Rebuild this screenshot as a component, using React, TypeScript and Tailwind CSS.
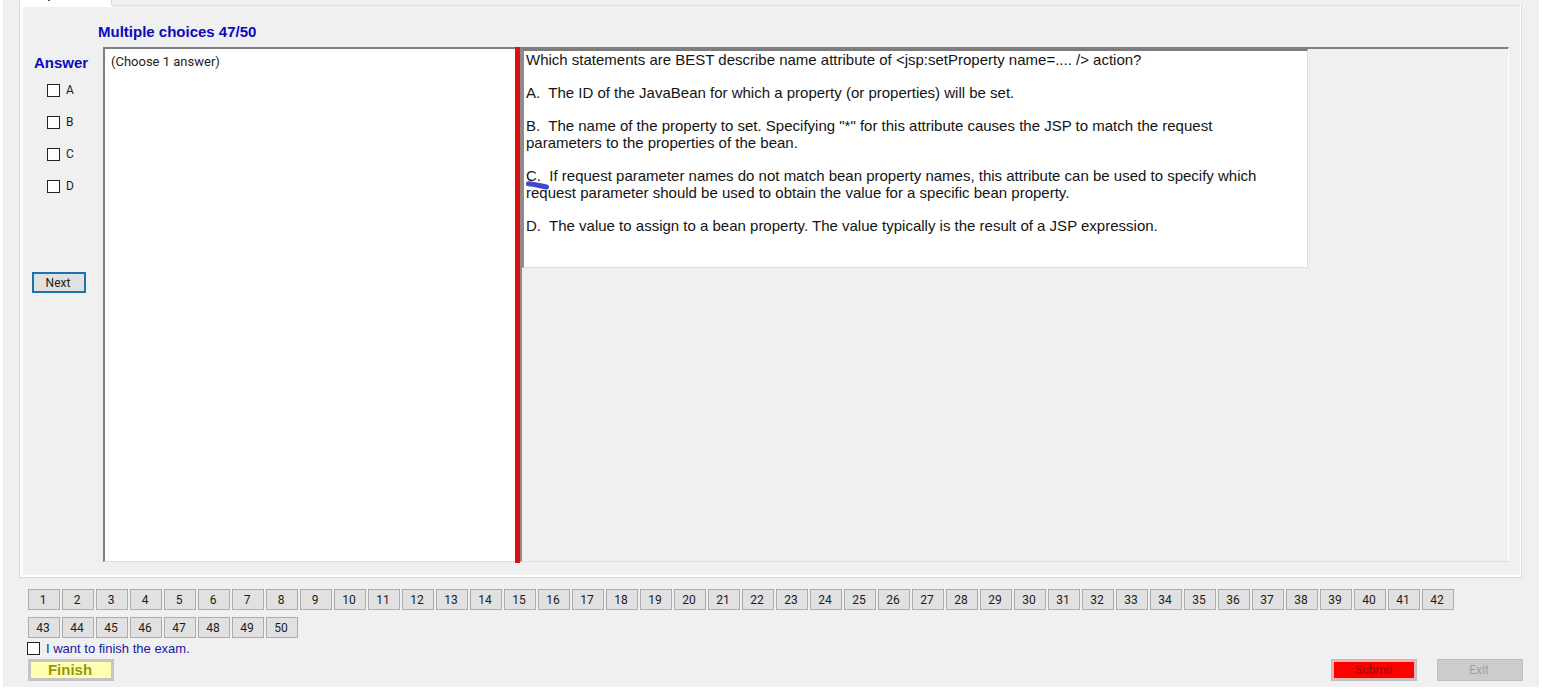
import { useState } from 'react';

const choices = ['A', 'B', 'C', 'D'];
const questionNumbers = Array.from({ length: 50 }, (_, i) => i + 1);

const checkboxClass =
  'h-[13px] w-[13px] shrink-0 appearance-none border border-[#222222] bg-white checked:bg-[#1a1a9a]';

function Choice({ letter }: { letter: string }) {
  return (
    <label className="flex h-4 items-center gap-[6px] text-xs text-[#1c1c1c]">
      <input type="checkbox" name={letter} className={checkboxClass} />
      {letter}
    </label>
  );
}

function AnswerColumn() {
  return (
    <aside className="flex w-20 shrink-0 flex-col items-start">
      <h2 className="mt-[6px] ml-[11px] font-['Liberation_Sans',sans-serif] text-[15px] leading-5 font-bold text-[#0a0abe]">
        Answer
      </h2>
      <div className="mt-[9px] ml-6 flex flex-col gap-4">
        {choices.map((letter) => (
          <Choice key={letter} letter={letter} />
        ))}
      </div>
      <button
        type="button"
        className="mt-[78px] ml-[9px] h-[21px] w-[54px] border-2 border-[#1f73ad] bg-[#e1e1e1] pr-[2px] text-xs leading-4 text-[#1c1c1c]"
      >
        Next
      </button>
    </aside>
  );
}

function Question() {
  return (
    <article className="flex h-[219px] w-[786px] flex-col gap-4 border-t-2 border-r border-b border-l-2 border-t-[#7c7c7c] border-r-[#dddddd] border-b-[#dddddd] border-l-[#8c8c8c] bg-white pl-[2px] font-['Liberation_Sans',sans-serif] text-[15px] leading-[17px] text-[#141414]">
      <p>Which statements are BEST describe name attribute of &lt;jsp:setProperty name=.... /&gt; action?</p>
      <p>A.&nbsp; The ID of the JavaBean for which a property (or properties) will be set.</p>
      <p>
        B.&nbsp; The name of the property to set. Specifying "*" for this attribute causes the JSP to match the request
        <br />
        parameters to the properties of the bean.
      </p>
      <p className="relative">
        C.&nbsp; If request parameter names do not match bean property names, this attribute can be used to specify which
        <br />
        request parameter should be used to obtain the value for a specific bean property.
        <svg className="absolute top-3 left-0 h-3 w-6" viewBox="0 0 24 12" fill="none" aria-hidden="true">
          <path d="M2.500 4.800 C8 5.200 14 6.800 20.500 8" stroke="#3f48cc" strokeWidth="5" strokeLinecap="round" />
        </svg>
      </p>
      <p>D.&nbsp; The value to assign to a bean property. The value typically is the result of a JSP expression.</p>
    </article>
  );
}

export default function App() {
  const [finishing, setFinishing] = useState(false);

  return (
    <div className="bg-white pb-[3px] font-[Roboto,sans-serif]">
      <main className="mx-[3px] bg-[#f0f0f0] pb-[6px]">
        <div className="ml-4 flex h-[5px]">
          <div className="w-[93px] border-r border-l border-[#dcdcdc] bg-white pl-7">
            <div className="h-px w-[2px] bg-[#555555]" />
          </div>
        </div>

        <section className="mr-[17px] ml-4 border border-[#dcdcdc]">
          <div className="border-r border-b-2 border-l-[3px] border-white">
            <div className="-mt-px h-[2px] w-[89px] bg-white" />
            <h1 className="mt-[15px] ml-[75px] font-['Liberation_Sans',sans-serif] text-[15px] leading-5 font-bold text-[#0a0abe]">
              Multiple choices 47/50
            </h1>
            <div className="mt-[5px] mr-[11px] mb-3 flex h-[516px]">
              <AnswerColumn />
              <div className="mb-px w-[412px] shrink-0 border-t-2 border-b border-l-2 border-t-[#808080] border-b-[#dddddd] border-l-[#808080] bg-white pt-1 pl-[6px] text-[13px] leading-[18px] text-[#1c1c1c]">
                (Choose 1 answer)
              </div>
              <div className="w-[5px] shrink-0 bg-[#e00f0f]" />
              <div className="mb-px min-w-0 grow border-t-2 border-r border-b border-l-2 border-t-[#808080] border-r-white border-b-[#dddddd] border-l-[#8c8c8c]">
                <Question />
              </div>
            </div>
          </div>
        </section>

        <nav className="mt-[11px] mr-[70px] ml-[25px] flex flex-wrap gap-x-[2px] gap-y-[7px]">
          {questionNumbers.map((n) => (
            <button
              key={n}
              type="button"
              className="h-[21px] w-8 border border-[#adadad] bg-[#e1e1e1] pr-[2px] text-xs leading-4 text-[#1c1c1c]"
            >
              {n}
            </button>
          ))}
        </nav>

        <footer className="mr-4 ml-6 flex items-end justify-between">
          <div>
            <label className="flex h-[21px] items-center gap-[6px] font-['Liberation_Sans',sans-serif] text-[13px] text-[#1717a5]">
              <input
                type="checkbox"
                checked={finishing}
                onChange={(e) => setFinishing(e.target.checked)}
                className={checkboxClass}
              />
              I want to finish the exam.
            </label>
            <button
              type="button"
              className="ml-px block h-[22px] w-[86px] border-[3px] border-[#c4c4c4] bg-[#ffffb4] pr-[2px] font-['Liberation_Sans',sans-serif] text-[15px] leading-4 font-bold text-[#96960c]"
            >
              Finish
            </button>
          </div>
          <div className="flex gap-5">
            <button
              type="button"
              className="h-[22px] w-[86px] border border-[#bfbfbf] bg-[#e6b8b2] p-[2px] text-xs leading-4 text-[#8a1010]"
            >
              <span className="block bg-[#ff0000]">Submit</span>
            </button>
            <button
              type="button"
              className="h-[22px] w-[86px] border border-[#bfbfbf] bg-[#cccccc] pr-[2px] text-xs leading-4 text-[#a0a0a0]"
            >
              Exit
            </button>
          </div>
        </footer>
      </main>
    </div>
  );
}
